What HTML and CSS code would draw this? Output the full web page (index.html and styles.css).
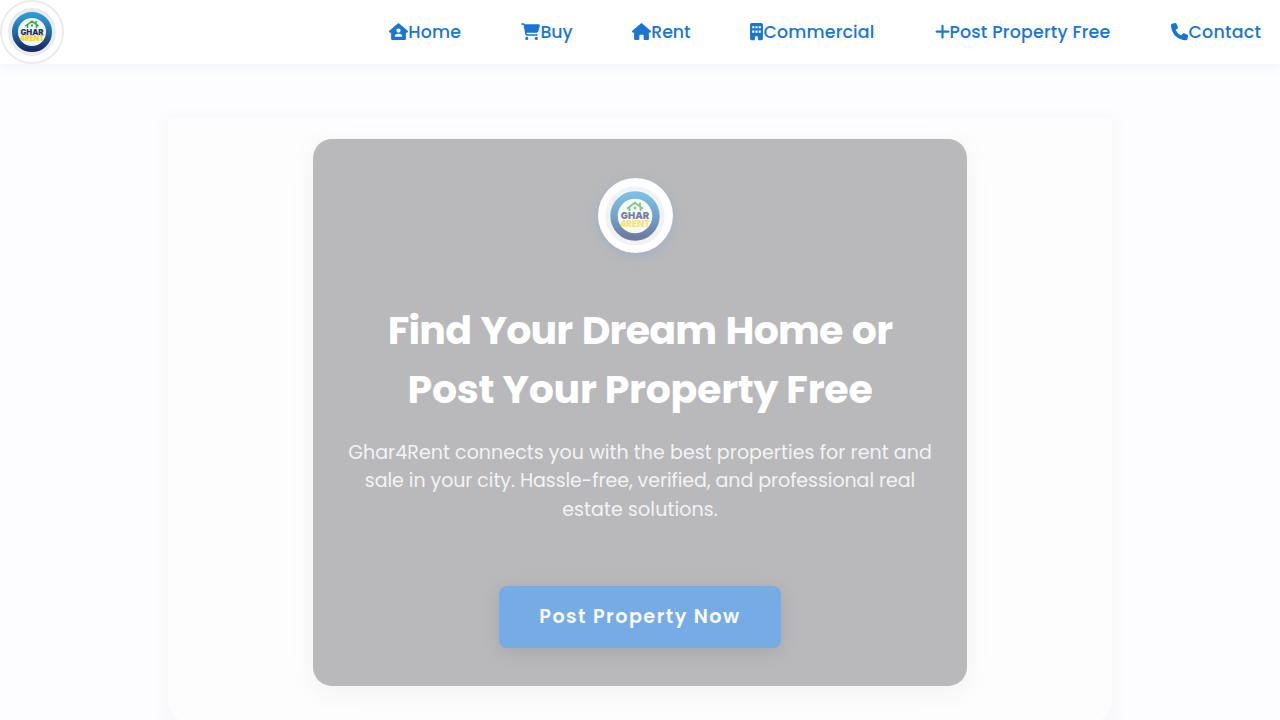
FILE: index.html
```html
<!DOCTYPE html>
<html lang="en">
<head>
<meta charset="utf-8">
<title>Ghar4Rent</title>
<link rel="stylesheet" href="styles.css">
</head>
<body>
<svg class="defs" width="0" height="0" aria-hidden="true">
  <defs>
    <linearGradient id="ring" x1="0" y1="0" x2="0" y2="1"><stop offset="0" stop-color="#2c9bd2"/><stop offset=".5" stop-color="#1f6cab"/><stop offset="1" stop-color="#152d68"/></linearGradient>
    <symbol id="logo" viewBox="0 0 60 60">
      <circle cx="30" cy="30" r="24" fill="#ebebeb"/>
      <circle cx="30" cy="30" r="17" fill="#f5f6f6" stroke="url(#ring)" stroke-width="6"/>
      <path d="M23.500 24.200l6.500-5 6.500 5M25.500 23v3M34.500 23v3M34 19v3" fill="none" stroke="#39a64a" stroke-width="1.500"/>
      <path d="M29 22.500h2v2h-2z" fill="#39a64a"/>
      <text x="30" y="32.500" class="logo-top" textLength="23" lengthAdjust="spacingAndGlyphs">GHAR</text>
      <text x="30" y="39" class="logo-bottom" textLength="24.500" lengthAdjust="spacingAndGlyphs">4RENT</text>
    </symbol>
  </defs>
</svg>
<header class="navbar">
  <a class="brand"><svg class="brand-logo"><use href="#logo"/></svg></a>
  <nav class="menu">
    <a class="link"><svg class="icon" viewBox="0 0 576 512"><path fill-rule="evenodd" d="M575.800 255.500c0 18-15 32.100-32 32.100h-32l.7 160.200V472c0 22.100-17.900 40-40 40H104c-22.100 0-40-17.900-40-40V287.600H32c-18 0-32-14-32-32.100c0-9 3-17 10-24L266.400 8c7-7 15-8 22-8s15 2 21 7L564.800 231.500c8 7 12 15 11 24zM352 224a64 64 0 1 0-128 0 64 64 0 1 0 128 0zm-96 96c-44.200 0-80 35.800-80 80c0 8.800 7.200 16 16 16H384c8.800 0 16-7.200 16-16c0-44.200-35.800-80-80-80H256z"/></svg><span class="label home">Home</span></a>
    <a class="link"><svg class="icon" viewBox="0 0 576 512"><path d="M0 24C0 10.700 10.700 0 24 0H69.500c22 0 41.500 12.800 50.600 32h411c26.300 0 45.500 25 38.600 50.400l-41 152.300c-8.500 31.400-37 53.300-69.500 53.300H170.700l5.400 28.500c2.200 11.300 12.100 19.500 23.600 19.500H488c13.300 0 24 10.700 24 24s-10.700 24-24 24H199.700c-34.600 0-64.300-24.600-70.700-58.500L77.400 54.500c-.7-3.800-4-6.500-7.900-6.500H24C10.700 48 0 37.300 0 24zM128 464a48 48 0 1 1 96 0 48 48 0 1 1-96 0zm336-48a48 48 0 1 1 0 96 48 48 0 1 1 0-96z"/></svg><span class="label buy">Buy</span></a>
    <a class="link"><svg class="icon" viewBox="0 0 576 512"><path d="M575.800 255.500c0 18-15 32.100-32 32.100h-32l.7 160.200V472c0 22.100-17.900 40-40 40H392c-22.100 0-40-17.900-40-40V384c0-17.700-14.300-32-32-32H256c-17.700 0-32 14.300-32 32v88c0 22.100-17.900 40-40 40H104c-22.100 0-40-17.900-40-40V287.600H32c-18 0-32-14-32-32.100c0-9 3-17 10-24L266.400 8c7-7 15-8 22-8s15 2 21 7L564.800 231.500c8 7 12 15 11 24z"/></svg><span class="label rent">Rent</span></a>
    <a class="link"><svg class="icon narrow" viewBox="0 0 384 512"><path fill-rule="evenodd" d="M48 0C21.500 0 0 21.500 0 48V464c0 26.500 21.500 48 48 48h96V432c0-26.500 21.500-48 48-48s48 21.500 48 48v80h96c26.500 0 48-21.500 48-48V48c0-26.500-21.500-48-48-48H48zM64 96h64v64H64zM160 96h64v64h-64zM256 96h64v64h-64zM64 224h64v64H64zM160 224h64v64h-64zM256 224h64v64h-64z"/></svg><span class="label commercial">Commercial</span></a>
    <a class="link"><svg class="icon plus" viewBox="0 0 448 512"><path d="M256 80c0-17.700-14.300-32-32-32s-32 14.300-32 32V224H48c-17.700 0-32 14.300-32 32s14.300 32 32 32H192V432c0 17.700 14.300 32 32 32s32-14.300 32-32V288H400c17.700 0 32-14.300 32-32s-14.300-32-32-32H256V80z"/></svg><span class="label post">Post Property Free</span></a>
    <a class="link"><svg class="icon square" viewBox="0 0 512 512"><path d="M164.900 24.600c-7.700-18.600-28-28.500-47.400-23.200l-88 24C12.100 30.200 0 46 0 64C0 311.400 200.600 512 448 512c18 0 33.800-12.100 38.600-29.500l24-88c5.300-19.400-4.600-39.700-23.200-47.400l-96-40c-16.300-6.800-35.200-2.100-46.300 11.600L304.700 368C234.300 334.700 177.300 277.700 144 207.300L193.300 167c13.700-11.200 18.400-30 11.600-46.300l-40-96z"/></svg><span class="label contact">Contact</span></a>
  </nav>
</header>
<main class="hero">
  <section class="card">
    <div class="badge"><svg class="badge-logo"><use href="#logo"/></svg></div>
    <h1 class="title"><span class="t1">Find Your Dream Home or</span><br><span class="t2">Post Your Property Free</span></h1>
    <p class="copy"><span class="c1">Ghar4Rent connects you with the best properties for rent and</span><br><span class="c2">sale in your city. Hassle-free, verified, and professional real</span><br><span class="c3">estate solutions.</span></p>
    <a class="button"><span class="button-text">Post Property Now</span></a>
  </section>
</main>
</body>
</html>
```

FILE: styles.css
```css
* { box-sizing: border-box; }
body { margin: 0; height: 720px; overflow: hidden; background: #fdfdff; font-family: Poppins, Inter, sans-serif; }
.defs { position: absolute; }
.logo-top, .logo-bottom { font: 900 7.800px Inter, sans-serif; text-anchor: middle; }
.logo-top { fill: #1c3561; }
.logo-bottom { fill: #f2d51e; }
.navbar { position: relative; height: 64px; display: flex; justify-content: space-between; align-items: center; padding-right: 17.500px; background: #fff; box-shadow: 0 2px 12px rgba(25, 118, 210, .08); }
.brand { width: 64px; height: 64px; border: 2px solid #ebebeb; border-radius: 50%; display: flex; background: #fff; }
.brand-logo { width: 60px; height: 60px; }
.menu { display: flex; gap: 60px; }
.link { display: flex; align-items: center; color: #1976d2; }
.icon { width: 19px; height: 17.200px; fill: currentColor; flex: none; }
.narrow { width: 13px; }
.plus { width: 15px; }
.square { width: 17.200px; }
.label { font-size: 17.400px; line-height: 26px; font-weight: 500; white-space: nowrap; }
.home { width: 53.100px; letter-spacing: .15px; }
.buy { width: 31.800px; letter-spacing: -.1px; }
.rent { width: 39.200px; letter-spacing: -.1px; }
.commercial { width: 111.100px; letter-spacing: .16px; }
.post { width: 161.700px; letter-spacing: .2px; }
.contact { width: 74.100px; letter-spacing: .27px; }
.hero { width: 944px; height: 606px; margin: 54px auto 0; padding-top: 21px; background: #fdfdfe; border-radius: 0 0 24px 24px; box-shadow: 0 4px 24px rgba(0, 0, 0, .045); }
.card { width: 654px; height: 547px; margin: 0 auto; padding-top: 39px; display: flex; flex-direction: column; align-items: center; background: #b9b9bb; border-radius: 19px; box-shadow: 0 6px 28px rgba(0, 0, 0, .05); text-align: center; color: #fff; }
.badge { width: 75px; height: 75px; margin-right: 10px; border-radius: 50%; display: flex; align-items: center; justify-content: center; background: #fefefe; box-shadow: 0 3px 10px rgba(110, 160, 220, .35); }
.badge-logo { width: 74px; height: 74px; opacity: .62; }
.title { margin: 48px 0 0; font-size: 39.500px; line-height: 59px; font-weight: 700; white-space: nowrap; }
.t1 { letter-spacing: -.8px; word-spacing: 1.700px; }
.t2 { letter-spacing: -.27px; }
.copy { margin: 19.700px 0 0; font-size: 19px; line-height: 28.600px; color: #f3f3f4; white-space: nowrap; }
.c1 { letter-spacing: .06px; }
.c2 { letter-spacing: -.06px; }
.c3 { letter-spacing: .1px; }
.button { width: 282px; height: 61.500px; margin-top: 61.700px; display: flex; align-items: center; justify-content: center; background: #76ace5; border-radius: 8px; box-shadow: 0 4px 18px rgba(0, 0, 0, .1); }
.button-text { font-size: 19.200px; font-weight: 600; letter-spacing: 1.450px; white-space: nowrap; color: #f9fbfe; }
```
